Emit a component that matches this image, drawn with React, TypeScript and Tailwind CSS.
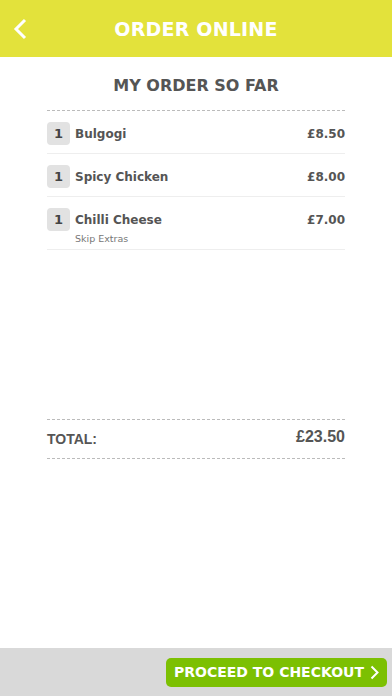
const items = [
  { qty: 1, name: "Bulgogi", price: "£8.50" },
  { qty: 1, name: "Spicy Chicken", price: "£8.00" },
  { qty: 1, name: "Chilli Cheese", price: "£7.00", note: "Skip Extras" },
];

const mont = "font-['DejaVu_Sans',sans-serif]";

export default function App() {
  return (
    <main className={`h-[696px] w-[392px] flex flex-col bg-white ${mont}`}>
      {/* Header */}
      <header className="relative h-[57px] shrink-0 bg-[#e3e23b] flex items-center justify-center">
        <svg
          className="absolute left-[13px] top-[18px]"
          width="14"
          height="22"
          viewBox="0 0 14 22"
          fill="none"
          stroke="white"
          strokeWidth="3"
        >
          <path d="M12 2 L3 11 L12 20" />
        </svg>
        <h1 className="text-white font-bold text-[19px] tracking-[0.2px] pt-[2px]">ORDER ONLINE</h1>
      </header>

      <section className="flex-1 px-[47px]">
        <h2 className="pt-[17px] pb-[12px] text-center text-[16px] leading-[24px] font-bold text-[#555]">MY ORDER SO FAR</h2>
        <div className="border-t border-dashed border-[#bbb]" />

        {items.map((it) => (
          <div key={it.name} className="border-b border-[#eee]">
            <div className={`flex items-center pt-[11px] ${it.note ? "pb-[2px]" : "pb-[8px]"}`}>
              <span className="w-[23px] h-[23px] rounded-[4px] bg-[#e2e2e2] flex items-center justify-center text-[13px] font-bold text-[#444]">
                {it.qty}
              </span>
              <span className="ml-[5px] text-[12px] font-bold text-[#555]">{it.name}</span>
              <span className="ml-auto text-[12px] font-bold text-[#555]">{it.price}</span>
            </div>
            {it.note && (
              <div className="pb-[4px] ml-[28px] text-[9.5px] leading-[12px] text-[#777]">{it.note}</div>
            )}
          </div>
        ))}

        <div className="mt-[169px] border-t border-dashed border-[#bbb]" />
        <div className="flex items-center justify-between h-[38px] font-['Liberation_Sans',sans-serif] text-[#555]">
          <span className="text-[14px] font-bold pt-[1px]">TOTAL:</span>
          <span className="text-[16px] font-semibold -mt-[4px]">£23.50</span>
        </div>
        <div className="border-t border-dashed border-[#bbb]" />
      </section>

      {/* Footer */}
      <footer className="h-[48px] shrink-0 bg-[#d9d9d9] flex items-center justify-end pr-[5px]">
        <button className="h-[29px] w-[221px] rounded-[5px] bg-[#7cc002] flex items-center justify-center gap-[6px] text-white font-bold text-[14px]">
          PROCEED TO CHECKOUT
          <svg width="9" height="15" viewBox="0 0 9 15" fill="none" stroke="white" strokeWidth="2">
            <path d="M1.5 1.5 L7.5 7.5 L1.5 13.5" />
          </svg>
        </button>
      </footer>
    </main>
  );
}
